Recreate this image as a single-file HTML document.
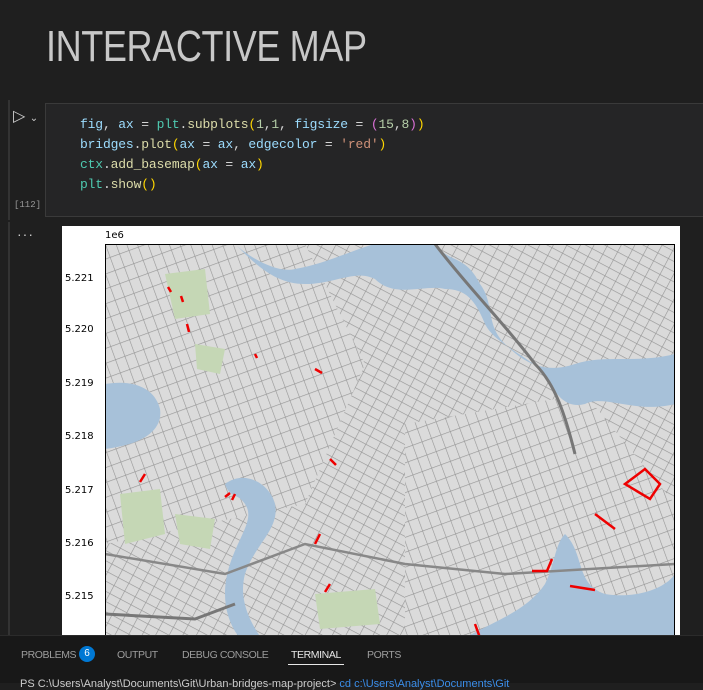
<!DOCTYPE html>
<html><head><meta charset="utf-8"><style>
*{margin:0;padding:0;box-sizing:border-box}
body{width:703px;height:683px;overflow:hidden;background:#1f1f1f;font-family:"Liberation Sans",sans-serif;position:relative}
.title{position:absolute;left:46px;top:22px;font-size:44px;color:#c8c8c8;letter-spacing:-0.5px;font-weight:normal;transform:scaleX(0.82);transform-origin:0 0;white-space:nowrap}
.cell{position:absolute;left:45px;top:103px;width:660px;height:114px;background:#252526;border:1px solid #3a3a3a;border-right:none}
.code{position:absolute;left:80px;top:115px;font-family:"Liberation Mono",monospace;font-size:13px;letter-spacing:-0.15px;line-height:20px;color:#d4d4d4;white-space:pre}
.v{color:#9cdcfe}.f{color:#dcdcaa}.y{color:#ffd700}.p{color:#da70d6}.n{color:#b5cea8}.s{color:#ce9178}.c{color:#4ec9b0}
.run{position:absolute;left:13px;top:106px;color:#ccc;font-size:16px}
.num{position:absolute;left:14px;top:200px;font-family:"Liberation Mono",monospace;font-size:9px;color:#999}
.dots{position:absolute;left:17px;top:226px;color:#ccc;font-size:14px;letter-spacing:1px}
.gut{position:absolute;left:8px;width:2px;background:#333}
.fig{position:absolute;left:62px;top:226px;width:618px;height:420px;background:#fff}
.lab{position:absolute;font-family:"DejaVu Sans",sans-serif;font-size:10px;color:#000}
.panel{position:absolute;left:0;top:635px;width:703px;height:48px;background:#181818;border-top:1px solid #2b2b2b}
.tab{position:absolute;top:13px;font-size:10.5px;color:#9d9d9d;letter-spacing:-0.4px}
</style></head><body>
<div class="title">INTERACTIVE MAP</div>
<div class="gut" style="top:100px;height:120px"></div>
<div class="gut" style="top:222px;height:413px"></div>
<div class="cell"></div>
<div class="run">▷ <span style="font-size:10px">⌄</span></div>
<div class="code"><span class="v">fig</span>, <span class="v">ax</span> = <span class="c">plt</span>.<span class="f">subplots</span><span class="y">(</span><span class="n">1</span>,<span class="n">1</span>, <span class="v">figsize</span> = <span class="p">(</span><span class="n">15</span>,<span class="n">8</span><span class="p">)</span><span class="y">)</span>
<span class="v">bridges</span>.<span class="f">plot</span><span class="y">(</span><span class="v">ax</span> = <span class="v">ax</span>, <span class="v">edgecolor</span> = <span class="s">'red'</span><span class="y">)</span>
<span class="c">ctx</span>.<span class="f">add_basemap</span><span class="y">(</span><span class="v">ax</span> = <span class="v">ax</span><span class="y">)</span>
<span class="c">plt</span>.<span class="f">show</span><span class="y">()</span></div>
<div class="num">[112]</div>
<div class="dots">···</div>
<div class="fig">
<div class="lab" style="left:43px;top:4px">1e6</div>
<div class="lab" style="left:3px;top:47px">5.221</div>
<div class="lab" style="left:3px;top:98px">5.220</div>
<div class="lab" style="left:3px;top:152px">5.219</div>
<div class="lab" style="left:3px;top:205px">5.218</div>
<div class="lab" style="left:3px;top:259px">5.217</div>
<div class="lab" style="left:3px;top:312px">5.216</div>
<div class="lab" style="left:3px;top:365px">5.215</div>
<svg style="position:absolute;left:43px;top:18px" width="570" height="400" viewBox="0 0 570 400">
<defs>
<pattern id="g1" width="12" height="9" patternUnits="userSpaceOnUse" patternTransform="rotate(28)">
<rect width="12" height="9" fill="#dadada"/><path d="M0 0H12M0 0V9" stroke="#959595" stroke-width="1.2"/></pattern>
<pattern id="g2" width="10" height="14" patternUnits="userSpaceOnUse" patternTransform="rotate(-20)">
<rect width="10" height="14" fill="#dbdbdb"/><path d="M0 0H10M0 0V14" stroke="#959595" stroke-width="1.2"/></pattern>
</defs>
<rect width="570" height="400" fill="url(#g1)"/>
<path d="M0 0H200L260 120L200 260L0 300Z" fill="url(#g2)"/>
<path d="M300 180L480 150L570 260V400H300Z" fill="url(#g2)"/>
<path d="M130 0C140 10 170 30 190 25C220 20 250 5 270 0H330C345 20 360 10 375 40C390 60 380 80 400 100C420 120 440 130 470 120C500 110 530 120 570 110V160C530 170 500 150 480 160C460 165 450 150 440 130C420 110 390 100 380 80C370 55 360 45 340 45C320 40 290 55 270 35C250 25 230 40 200 40C170 40 150 20 130 0Z" fill="#a7c1d9"/>
<path d="M0 140C30 135 50 145 55 165C58 185 40 200 0 205Z" fill="#a7c1d9"/>
<path d="M460 290C480 310 470 340 500 350C530 355 560 345 570 330V400H350C380 380 420 370 440 340C450 320 450 300 460 290Z" fill="#a7c1d9"/>
<path d="M120 240C140 225 165 240 170 260C175 285 150 300 140 330C132 360 150 385 160 400H140C120 380 115 350 125 320C135 290 150 275 140 260C132 248 125 255 120 240Z" fill="#a7c1d9"/>
<path d="M60 30L100 25L105 70L70 75Z" fill="#c5d7b5"/>
<path d="M15 250L55 245L60 290L20 300Z" fill="#c5d7b5"/>
<path d="M70 270L110 275L105 305L75 300Z" fill="#c5d7b5"/>
<path d="M210 350L270 345L275 380L215 385Z" fill="#c5d7b5"/>
<path d="M90 100L120 105L115 130L92 125Z" fill="#c5d7b5"/>
<path d="M330 0C360 40 400 80 430 120C450 140 460 170 470 210" stroke="#777" stroke-width="3" fill="none"/>
<path d="M0 310L120 330L200 300L300 320L400 330L570 320" stroke="#888" stroke-width="2.5" fill="none"/>
<path d="M0 370L90 375L130 360" stroke="#777" stroke-width="3" fill="none"/>
<g stroke="#e00" stroke-width="2.5" fill="none">
<path d="M63 43l3 5M76 52l2 6M82 80l2 8M150 110l2 4M210 125l7 4M225 215l6 6M130 250l-3 6M120 253l5 -4M215 290l-5 10M225 340l-5 8M447 315l-5 12h-15M520 240l20 -15l15 15l-10 15z M490 270l20 15M465 342l25 4M370 380l8 22M40 230l-5 8"/>
</g>
<rect x="0.5" y="0.5" width="569" height="399" fill="none" stroke="#000"/>
</svg>
</div>
<div class="panel">
<div class="tab" style="left:21px">PROBLEMS</div>
<div style="position:absolute;left:79px;top:10px;width:16px;height:16px;border-radius:8px;background:#0078d4;color:#fff;font-size:10px;text-align:center;line-height:16px">6</div>
<div class="tab" style="left:117px">OUTPUT</div>
<div class="tab" style="left:182px">DEBUG CONSOLE</div>
<div class="tab" style="left:291px;color:#e7e7e7">TERMINAL</div>
<div style="position:absolute;left:288px;top:28px;width:56px;height:1px;background:#e7e7e7"></div>
<div class="tab" style="left:367px">PORTS</div>
<div style="position:absolute;left:20px;top:42px;font-size:11px;color:#ccc;white-space:nowrap">PS C:\Users\Analyst\Documents\Git\Urban-bridges-map-project&gt; <span style="color:#3b8eea">cd c:\Users\Analyst\Documents\Git</span></div>
</div>
</body></html>
